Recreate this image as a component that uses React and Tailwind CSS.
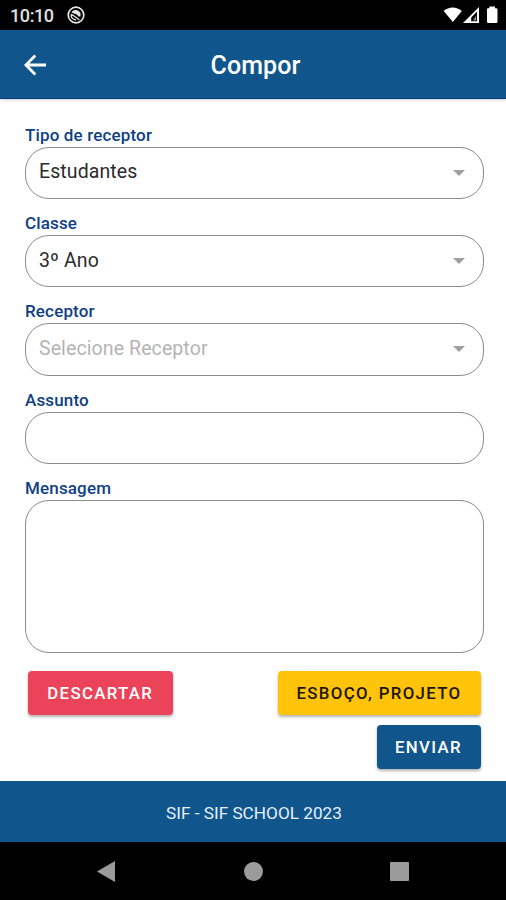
import React from 'react';

const fields = [
  { id: 'tipo', label: 'Tipo de receptor', value: 'Estudantes', type: 'select' },
  { id: 'classe', label: 'Classe', value: '3º Ano', type: 'select' },
  { id: 'receptor', label: 'Receptor', placeholder: 'Selecione Receptor', type: 'select' },
  { id: 'assunto', label: 'Assunto', type: 'text' },
  { id: 'mensagem', label: 'Mensagem', type: 'textarea' },
];

const StatusBar = () => (
  <div className="flex h-[30px] items-center bg-black pl-[10px] pr-[7px] text-white">
    <span className="w-[43px] whitespace-nowrap pt-[2px] text-[18px] font-medium leading-none tracking-[-0.4px] text-[#e0e0e0]">10:10</span>
    <svg className="ml-[14px] h-[18px] w-[18px]" viewBox="0 0 18 18" fill="none">
      <circle cx="9" cy="9" r="7.8" stroke="#e8e8e8" strokeWidth="1.7" />
      <path d="M4.4 6.2C6 4 8.4 3.6 10.6 4.4C13.2 5.4 14.2 7.6 13.4 10.6L11.8 10.6L9.4 8.2L6.8 7.4Z" fill="#e8e8e8" />
      <path d="M4.2 8.4L6.8 9.8L12.4 14M4.2 8.4C3.8 11.4 5.6 13.6 9 14" stroke="#e8e8e8" strokeWidth="1.3" />
    </svg>
    {/* Signal and battery */}
    <svg className="ml-auto h-[18px] w-[56px]" viewBox="0 0 56 18" fill="#fff">
      <path d="M0.6 5.1C5.8 0.2 13.6 0.2 18.8 5.1L9.9 16Z" />
      <path fillRule="evenodd" d="M36 1V17H20ZM34 5.6L28.2 11.6V15.2H34Z" />
      <path d="M33.2 9.4V14.6H29.8Z" fill="#8a8a8a" />
      <path d="M46.4 2.2V0.6H52V2.2H53.2Q54.5 2.2 54.5 3.5V15.7Q54.5 17 53.2 17H45.3Q44 17 44 15.7V3.5Q44 2.2 45.3 2.2Z" />
    </svg>
  </div>
);

const Header = () => (
  <header className="grid h-[69px] grid-cols-3 items-center border-b border-[#083a80] bg-[#10568c] px-[24px] text-white shadow-[0_1px_3px_rgba(0,0,0,0.2)]">
    <button className="w-fit pt-[1px]" aria-label="Voltar">
      <svg className="h-[22px] w-[23px]" viewBox="0 0 23 22" fill="none" stroke="#fff" strokeWidth="2.8">
        <path d="M11.3 1.6L1.9 11L11.3 20.4M2 11H22" />
      </svg>
    </button>
    <h1 className="pl-[5px] pt-[3px] text-center text-[25px] font-medium leading-none tracking-[0.1px]">Compor</h1>
  </header>
);

const Field = ({ field }) => (
  <div className="mb-[12px]">
    <label htmlFor={field.id} className="block h-[24px] whitespace-nowrap text-[17px] font-medium leading-[24px] tracking-[0.15px] text-[#0f3f85]">
      {field.label}
    </label>
    {field.type === 'select' && (
      <button
        id={field.id}
        className="flex h-[52.2px] w-full items-center justify-between rounded-[24px] border border-[#8c8c8c] pb-[2px] pl-[13px] pr-[18px] text-left text-[19.5px] tracking-[0.1px]"
      >
        {field.value ? (
          <span className="text-[#2b2b2b]">{field.value}</span>
        ) : (
          <span className="text-[#b4b4b4]">{field.placeholder}</span>
        )}
        <svg className="mt-[2px] h-[6px] w-[12px]" viewBox="0 0 12 6" fill="#a0a0a0">
          <path d="M0 0H12L6 6Z" />
        </svg>
      </button>
    )}
    {field.type === 'text' && (
      <input id={field.id} className="block h-[52.2px] w-full rounded-[24px] border border-[#8c8c8c] px-[13px] text-[19px] outline-none" />
    )}
    {field.type === 'textarea' && (
      <textarea id={field.id} className="block h-[153px] w-full resize-none rounded-[24px] border border-[#8c8c8c] p-[13px] text-[19px] outline-none" />
    )}
  </div>
);

const App = () => {
  return (
    <div className="flex h-[900px] w-[506px] flex-col overflow-hidden bg-white font-['Roboto',sans-serif]">
      <StatusBar />
      <Header />

      <main className="flex-1 pl-[25px] pr-[22px] pt-[24px]">
        {fields.map((field) => (
          <Field key={field.id} field={field} />
        ))}

        {/* Actions */}
        <div className="mt-[18px] flex items-start justify-between pl-[3px] pr-[3.5px] text-[16.8px] font-medium leading-none tracking-[1.35px]">
          <button className="h-[44px] w-[144.5px] rounded-[4px] bg-[#eb445a] pt-[1px] text-white shadow-[0_2px_3px_rgba(0,0,0,0.3)]">DESCARTAR</button>
          <div className="flex flex-col items-end gap-[10px]">
            <button className="h-[44px] w-[203px] rounded-[4px] bg-[#ffc409] pt-[1px] text-[#1c1500] shadow-[0_2px_3px_rgba(0,0,0,0.3)]">ESBOÇO, PROJETO</button>
            <button className="h-[44px] w-[104px] rounded-[4px] bg-[#10568c] pt-[1px] text-white shadow-[0_2px_3px_rgba(0,0,0,0.3)]">ENVIAR</button>
          </div>
        </div>
      </main>

      <footer className="flex h-[61px] items-center justify-center bg-[#10568c] pl-[2px] pt-[4px] text-[17.2px] leading-none text-[#e6efff]">
        <span className="whitespace-nowrap">SIF - SIF SCHOOL 2023</span>
      </footer>

      {/* Android navigation */}
      <nav className="flex h-[58px] items-center justify-between bg-black pl-[97px] pr-[97px]">
        <svg className="h-[21px] w-[18px]" viewBox="0 0 18 21" fill="#9b9b9b">
          <path d="M18 0V21L0 10.5Z" />
        </svg>
        <div className="ml-[2px] h-[19px] w-[19px] rounded-full bg-[#9b9b9b]"></div>
        <div className="h-[19px] w-[19px] rounded-[1px] bg-[#9b9b9b]"></div>
      </nav>
    </div>
  );
};

export default App;
